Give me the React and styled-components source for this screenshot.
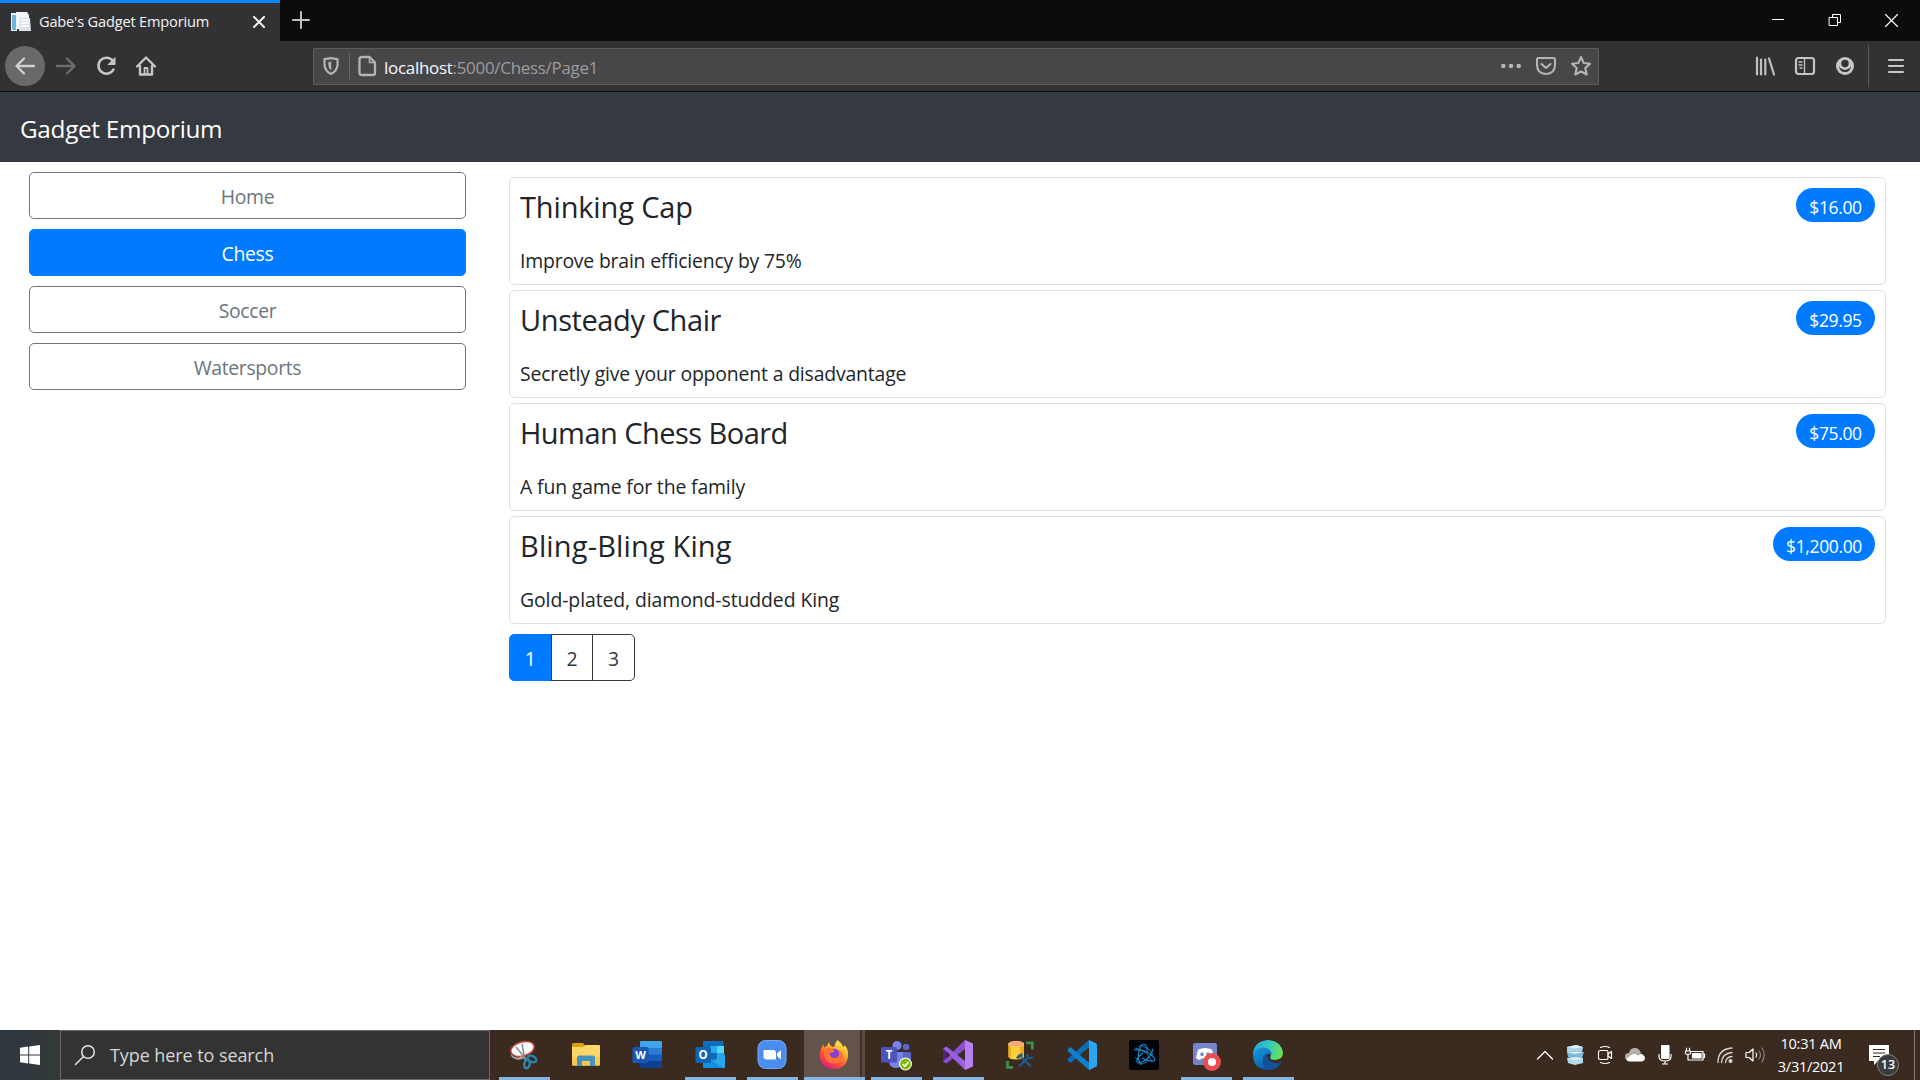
import React from "react";
import styled, { createGlobalStyle } from "styled-components";

const Global = createGlobalStyle`
  * { box-sizing: border-box; }
  html, body { margin: 0; padding: 0; }
  body { background: #fff; overflow: hidden; font-family: "Open Sans", "Noto Sans", sans-serif; }
  svg { display: block; flex: none; overflow: visible; }
`;

const Screen = styled.div`
  width: 1920px;
  height: 1080px;
  display: flex;
  flex-direction: column;
  background: #fff;
`;

/* ---------- browser chrome ---------- */
const TabStrip = styled.div`
  height: 41px;
  display: flex;
  background: #0c0c0d;
  flex: none;
`;
const Tab = styled.div`
  width: 280px;
  height: 41px;
  padding: 0 14px 0 11px;
  border-top: 3px solid #0a84ff;
  background: #323234;
  display: flex;
  align-items: center;
`;
const TabTitle = styled.span`
  flex: 1;
  margin-left: 8px;
  padding-bottom: 2px;
  font-size: 14.6px;
  line-height: 20px;
  letter-spacing: -0.18px;
  color: #f4f4f5;
  white-space: nowrap;
`;
const NewTab = styled.div`
  width: 42px;
  height: 40px;
  display: flex;
  align-items: center;
  justify-content: center;
`;
const WindowButtons = styled.div`
  margin-left: auto;
  display: flex;
`;
const WindowButton = styled.div`
  width: 57px;
  height: 40px;
  display: flex;
  align-items: center;
  justify-content: center;
`;
const Toolbar = styled.div`
  height: 51px;
  flex: none;
  display: flex;
  align-items: center;
  background: #323234;
  border-bottom: 1px solid #0c0c0d;
  padding: 0 4px 0 5px;
`;
const NavButton = styled.div`
  width: 40px;
  height: 40px;
  border-radius: 50%;
  display: flex;
  align-items: center;
  justify-content: center;
  background: ${(p) => (p.$filled ? "#69696b" : "transparent")};
  margin-right: ${(p) => p.$gap || "0"};
`;
const UrlBox = styled.div`
  width: 1286px;
  height: 37px;
  margin: 0 0 0 147px;
  background: #474749;
  border: 1px solid #5c5c5e;
  border-radius: 1px;
  display: flex;
  align-items: center;
  padding: 0 7px 0 9px;
`;
const UrlDivider = styled.div`
  width: 1px;
  height: 26px;
  background: #68686a;
  margin: 0 8px 0 10px;
`;
const UrlText = styled.span`
  margin-left: 8px;
  flex: 1;
  font-size: 16.9px;
  line-height: 24px;
  padding-top: 3px;
  color: #9c9c9e;
  white-space: nowrap;
  letter-spacing: -0.25px;
  b { font-weight: 400; color: #f9f9fa; }
`;
const UrlActions = styled.div`
  display: flex;
  gap: 15px;
`;
const ToolRight = styled.div`
  margin-left: auto;
  display: flex;
  align-items: center;
`;
const ToolButton = styled.div`
  width: 40px;
  display: flex;
  justify-content: center;
`;
const ToolDivider = styled.div`
  width: 1px;
  height: 42px;
  background: #58585a;
  margin: 0 7px 0 3px;
`;

/* ---------- page ---------- */
const Navbar = styled.header`
  height: 70px;
  flex: none;
  background: #343a40;
  display: flex;
  align-items: center;
  padding: 2px 20px 0;
  color: #fff;
  font-size: 24.3px;
  line-height: 37px;
  letter-spacing: -0.3px;
`;
const Content = styled.main`
  flex: 1;
  display: flex;
  align-items: flex-start;
  padding: 10px 34px 0 29px;
`;
const Sidebar = styled.nav`
  width: 437px;
  margin-right: 43px;
  display: flex;
  flex-direction: column;
  gap: 10px;
`;
const CategoryButton = styled.a`
  height: 47px;
  border: 1px solid ${(p) => (p.$active ? "#007bff" : "#6c757d")};
  border-radius: 5px;
  background: ${(p) => (p.$active ? "#007bff" : "#fff")};
  color: ${(p) => (p.$active ? "#fff" : "#6c757d")};
  display: flex;
  align-items: center;
  justify-content: center;
  padding-top: 1px;
  font-size: 19.4px;
  letter-spacing: -0.34px;
`;
const Products = styled.section`
  flex: 1;
  padding-top: 5px;
  display: flex;
  flex-direction: column;
  gap: 5px;
`;
const Card = styled.article`
  height: 108px;
  border: 1px solid #dee2e6;
  border-radius: 5px;
  padding: 10px;
  color: #212529;
`;
const CardHead = styled.div`
  display: flex;
  justify-content: space-between;
  align-items: flex-start;
  height: 34px;
`;
const CardTitle = styled.h4`
  margin: 0;
  font-weight: 400;
  font-size: 29px;
  line-height: 38px;
  white-space: nowrap;
  letter-spacing: ${(p) => p.$tracking}px;
`;
const Price = styled.span`
  height: 34px;
  border-radius: 17px;
  background: #007bff;
  color: #fff;
  width: ${(p) => p.$w}px;
  text-align: center;
  font-size: 17.5px;
  line-height: 38px;
  letter-spacing: -0.35px;
`;
const CardText = styled.p`
  margin: 24px 0 0;
  font-size: 19.4px;
  line-height: 30px;
  white-space: nowrap;
  letter-spacing: ${(p) => p.$tracking}px;
`;
const Pager = styled.div`
  display: flex;
  margin-top: 5px;
`;
const PageLink = styled.a`
  width: 42.66px;
  height: 47px;
  margin-left: ${(p) => (p.$first ? 0 : -1)}px;
  border: 1px solid ${(p) => (p.$active ? "#007bff" : "#343a40")};
  background: ${(p) => (p.$active ? "#007bff" : "#fff")};
  color: ${(p) => (p.$active ? "#fff" : "#343a40")};
  border-radius: ${(p) => (p.$first ? "5px 0 0 5px" : p.$last ? "0 5px 5px 0" : "0")};
  display: flex;
  align-items: center;
  justify-content: center;
  padding-top: 1px;
  font-size: 19.4px;
`;

/* ---------- taskbar ---------- */
const Taskbar = styled.footer`
  height: 50px;
  flex: none;
  display: flex;
  background: #3a2a20;
  color: #fff;
`;
const Start = styled.div`
  width: 60px;
  display: flex;
  align-items: center;
  justify-content: center;
  background: linear-gradient(90deg, #2e3740, #343938);
`;
const Search = styled.div`
  width: 430px;
  border: 1px solid #6b6866;
  background: #333;
  display: flex;
  align-items: center;
  padding-left: 14px;
  color: #d6d6d6;
  font-size: 18px;
  letter-spacing: -0.08px;
  span { margin-left: 15px; }
`;
const Apps = styled.div`
  display: flex;
  margin-left: 3px;
`;
const AppButton = styled.div`
  width: 62px;
  height: 50px;
  padding: 10px 0 0 ${(p) => (p.$focused ? 15 : 16) + (p.$nudge || 0)}px;
  background: ${(p) =>
    p.$focused
      ? "linear-gradient(#85b5e3,#85b5e3) 0 47px/61px 3px no-repeat, linear-gradient(90deg,#62544c 56px,#3d2f27 56px,#3d2f27 58px,#584941 58px) 0 0/61px 50px no-repeat"
      : p.$open
      ? "linear-gradient(#85b5e3,#85b5e3) 6px 47px/51px 3px no-repeat"
      : "none"};
  margin-left: ${(p) => (p.$focused ? 1 : 0)}px;
  margin-right: ${(p) => (p.$focused ? -1 : 0)}px;
`;
const Tray = styled.div`
  margin-left: auto;
  display: flex;
  align-items: center;
`;
const TrayIcon = styled.div`
  width: 30px;
  display: flex;
  justify-content: center;
`;
const Clock = styled.div`
  width: 82px;
  font-size: 14.6px;
  line-height: 23px;
  text-align: center;
  white-space: nowrap;
  letter-spacing: -0.3px;
`;
const Notices = styled.div`
  position: relative;
  width: 62px;
  height: 50px;
  padding: 15px 0 0 17px;
`;
const NoticeCount = styled.span`
  position: absolute;
  left: 25px;
  top: 24px;
  width: 22px;
  height: 22px;
  border: 1px solid #86807b;
  border-radius: 50%;
  background: #3b3b3b;
  font-size: 12.5px;
  line-height: 20px;
  font-weight: 600;
  text-align: center;
`;
const ShowDesktop = styled.div`
  width: 6px;
  height: 50px;
  border-left: 1px solid #82766f;
`;

const Stroke = ({ w = 20, h = w, c = "#c6c6c7", sw = 2, children }) => (
  <svg width={w} height={h} viewBox={`0 0 ${w} ${h}`} fill="none" stroke={c} strokeWidth={sw} strokeLinecap="round" strokeLinejoin="round">
    {children}
  </svg>
);

const Favicon = () => (
  <svg width="20" height="20" viewBox="0 0 20 20">
    <path d="M0 1h6v18H0z" fill="#e8f3fa" />
    <path d="M1 3h4v15H1z" fill="#6fb2dc" />
    <path d="M5 0h11l2 3v14H6z" fill="#f2f5f7" />
    <path d="M9 6h10l1 13H8z" fill="#dce2e6" />
    <path d="M10 8h8M10 11h8M10 14h8" stroke="#fff" strokeWidth="1.3" />
  </svg>
);

const SnipIcon = () => (
  <svg width="30" height="30" viewBox="0 0 30 30">
    <ellipse cx="13.500" cy="9" rx="12" ry="7" fill="#fff" stroke="#c4403d" strokeWidth="1.4" transform="rotate(-16 13.5 9)" />
    <path d="M1.500 14q6 6 11 2l3 2q-4 2.500-8 1.500Q2 18 1.500 14z" fill="#a9a9ab" />
    <path d="M7 7l10 12M13 4l3 16" stroke="#8d8f92" strokeWidth="1.6" />
    <g fill="none" stroke="#2f82a9" strokeWidth="2.500">
      <ellipse cx="23" cy="19" rx="4.600" ry="2.900" transform="rotate(25 23 19)" />
      <ellipse cx="18" cy="24" rx="2.700" ry="4.300" transform="rotate(12 18 24)" />
    </g>
  </svg>
);
const ExplorerIcon = () => (
  <svg width="30" height="30" viewBox="0 0 30 30">
    <path d="M1 4.500q0-1.500 1.500-1.500H12l2 2.500V9H1z" fill="#d9a00f" />
    <path d="M1 7h11l2.500-2H28q1 0 1 1v18.500q0 1-1 1H2q-1 0-1-1z" fill="#fcd667" />
    <path d="M1 17h28v7.500q0 1-1 1H2q-1 0-1-1z" fill="#f8cb50" />
    <path d="M6 26v-8q0-2.500 2.500-2.500h13Q24 15.500 24 18v8h-5v-5h-8v5z" fill="#4693bb" />
  </svg>
);
const WordIcon = () => (
  <svg width="30" height="30" viewBox="0 0 30 30">
    <rect x="8" y="1" width="22" height="27" rx="1.500" fill="#2b7cd3" />
    <path d="M8 8V2.500Q8 1 9.500 1h19Q30 1 30 2.500V8z" fill="#41a5ee" />
    <path d="M8 14.500h22V21H8z" fill="#185abd" />
    <path d="M8 21h22v5.500q0 1.500-1.500 1.500h-19Q8 28 8 26.500z" fill="#103f91" />
    <rect x="0.500" y="7" width="16" height="16" rx="1.500" fill="#1a56b4" />
    <text x="8.500" y="19" fontSize="11" fontWeight="700" fill="#fff" textAnchor="middle" fontFamily="Open Sans">W</text>
  </svg>
);
const OutlookIcon = () => (
  <svg width="30" height="30" viewBox="0 0 30 30">
    <rect x="8" y="1" width="20.500" height="20" rx="1" fill="#0f6cbd" />
    <path d="M15 6h7v7h-7z" fill="#28a8ea" />
    <path d="M22 6h7v7h-7z" fill="#50d9ff" />
    <path d="M22 13h7v7h-7z" fill="#28a8ea" />
    <path d="M8 14l11 7 11-7v12.500q0 1.500-1.500 1.500h-19Q8 28 8 26.500z" fill="#1490df" />
    <path d="M30 15v11.500q0 1.500-1.500 1.500L17 21z" fill="#28a8ea" />
    <rect x="0.500" y="7" width="15.500" height="16" rx="1.500" fill="#1066b5" />
    <text x="8.200" y="19" fontSize="11.500" fontWeight="700" fill="#fff" textAnchor="middle" fontFamily="Open Sans">O</text>
  </svg>
);
const ZoomIcon = () => (
  <svg width="30" height="30" viewBox="0 0 30 30">
    <rect x="1" y="0.500" width="28" height="28" rx="7.500" fill="#4a8cf0" stroke="#78a9f3" />
    <path d="M6.500 10H16q3 0 3 3v6.500H9.500q-3 0-3-3z" fill="#fff" />
    <path d="M20 13.500l4-3.500v9.500l-4-3.500z" fill="#fff" />
  </svg>
);
const FirefoxIcon = () => (
  <svg width="30" height="30" viewBox="0 0 30 30">
    <defs>
      <linearGradient id="ff" x1="0.850" y1="0" x2="0.250" y2="1">
        <stop offset="0" stopColor="#fff44f" /><stop offset="0.350" stopColor="#ffb12e" />
        <stop offset="0.650" stopColor="#ff5634" /><stop offset="1" stopColor="#e31587" />
      </linearGradient>
    </defs>
    <path d="M18.500 0q4.500 3 6 7 1.300-.5 1.200-2 4.300 5 3.300 11.500Q27.500 28.500 15 29 2 28.500.7 16.500.4 11 3 6.500l.8-2.300 1.500 3.300q1.500-1.500 3-1.800 0-2 1.800-3.400.4 2.800 2.600 4.200 1.500.7 2.500.5Q15.500 3 18.500 0z" fill="url(#ff)" />
    <circle cx="15" cy="14" r="5.600" fill="#8a3fd0" />
    <path d="M5 9q4.500-2.500 9 .5 1.500.3 1.500 1.200-1 2-5 2.300.5 5.500 6 5 4-.8 4-5-.5-2-2-3.500 6.500 2 5 8-2 6-9 6-9-.5-9.500-9z" fill="#ff7430" />
  </svg>
);
const TeamsIcon = () => (
  <svg width="32" height="30" viewBox="0 0 32 30">
    <circle cx="17" cy="5.500" r="4.500" fill="#7b83eb" />
    <circle cx="26" cy="7" r="3.300" fill="#5a63cf" />
    <path d="M20 12h10q1 0 1 1v7q0 5-5 5h-6z" fill="#5a63cf" />
    <path d="M9 12h14v9q0 7-7 7t-7-7z" fill="#7b83eb" />
    <rect x="1" y="7" width="16" height="15.500" rx="1.500" fill="#4b53bc" />
    <text x="9" y="19" fontSize="11.500" fontWeight="700" fill="#fff" textAnchor="middle" fontFamily="Open Sans">T</text>
    <circle cx="25.500" cy="24" r="6.500" fill="#fff" />
    <circle cx="25.500" cy="24" r="5.400" fill="#7fba00" />
    <path d="M22.500 24l2.200 2.300 3.800-4.300" fill="none" stroke="#fff" strokeWidth="1.600" />
  </svg>
);
const VisualStudioIcon = () => (
  <svg width="30" height="30" viewBox="0 0 30 30">
    <path d="M0 8.500L3.500 6.500 5 11v9l-1.500 3.500L0 21.500z" fill="#52218a" />
    <path d="M3.500 23.500L0 21.500 22 0v9z" fill="#8a50cf" />
    <path d="M3.500 6.500L0 8.500 22 30v-9z" fill="#9a5fe0" />
    <path d="M3.500 11.500v7l3.600-3.500z" fill="#3a2a20" />
    <path d="M22 0l8 3.500v23L22 30z" fill="#b57ff0" />
  </svg>
);
const SqlIcon = () => (
  <svg width="30" height="30" viewBox="0 0 30 30">
    <path d="M21 2.800h6.300V9.500M8 27.300H2.500V21" fill="none" stroke="#3f8f45" strokeWidth="2.800" />
    <path d="M3.500 4v12.500q0 3 7.700 3t7.800-3V4z" fill="#fdcf3c" />
    <path d="M3.500 4v12.500q0 1.500 2.500 2.300V5zM15 5.500L19 4v12.500q0 1.500-4 2.500z" fill="#f4ab1e" />
    <ellipse cx="11.200" cy="4" rx="7.600" ry="2.600" fill="#f6a878" stroke="#f9c66a" />
    <g stroke="#1d5c8c" fill="none">
      <path d="M14 26.500L23.500 17M16.500 17.500l9.500 9" strokeWidth="2.400" />
      <path d="M12.500 18.500q1.500-3.500 5-3.500" strokeWidth="3" />
      <path d="M22.300 13.500q-.3 3.500 1.500 4.500 1.800.8 4-1.200" strokeWidth="2" />
    </g>
  </svg>
);
const CodeIcon = () => (
  <svg width="30" height="30" viewBox="0 0 30 30">
    <path d="M1 18.500L22 0l4 4L4 22.500Q3 23 2 22L.800 20.500q-.8-1 .2-2z" fill="#0a6fb5" />
    <path d="M1 11.500L22 30l4-4L4 7.500Q3 7 2 8L.800 9.500q-.8 1 .2 2z" fill="#1180cc" />
    <path d="M22 0l7 3.200q1 .5 1 1.500v20.600q0 1-1 1.500L22 30z" fill="#2aa5ef" />
  </svg>
);
const BattleIcon = () => (
  <svg width="30" height="30" viewBox="0 0 30 30">
    <rect width="30" height="30" rx="2" fill="#020306" />
    <g fill="none" stroke="#168bd4" strokeWidth="1.200">
      <path d="M5 10q9-1 16 4 7 5 4 7-6 1-12-3" />
      <path d="M12 25q-4-6-2-14 2-7 5-7 4 2 3 8" />
      <path d="M24 9q-2 8-9 12-7 4-7 0 0-4 6-8" />
      <path d="M6 8q7 1 12 6l5 7M9 7l3-2 9 5 3 5M6 17l7 7 5-2" strokeWidth="0.800" />
    </g>
  </svg>
);
const DiscordIcon = () => (
  <svg width="30" height="30" viewBox="0 0 30 30">
    <rect x="1" y="3" width="24" height="22" rx="2.500" fill="#7486c9" />
    <path d="M6 9.500q7-3 14 0l2 8.500q-2 2-4 2l-1-1.500H9L8 20q-2 0-4-2z" fill="#fff" />
    <ellipse cx="10" cy="14.200" rx="1.700" ry="2" fill="#7486c9" />
    <ellipse cx="16" cy="14.200" rx="1.700" ry="2" fill="#7486c9" />
    <circle cx="20" cy="22" r="9" fill="#ed4c50" />
    <circle cx="20" cy="22" r="4" fill="#fff" />
  </svg>
);
const EdgeIcon = () => (
  <svg width="30" height="30" viewBox="0 0 30 30">
    <defs>
      <linearGradient id="edgeTop" x1="0" y1="0.300" x2="1" y2="0.500">
        <stop offset="0" stopColor="#2aa5dd" /><stop offset="0.500" stopColor="#36c8c2" /><stop offset="1" stopColor="#6be251" />
      </linearGradient>
      <linearGradient id="edgeLow" x1="0" y1="0" x2="0.500" y2="1">
        <stop offset="0" stopColor="#1b9de2" /><stop offset="1" stopColor="#0b5cab" />
      </linearGradient>
    </defs>
    <path d="M0 14Q1 1 15 0q13 .5 15 12.500 0 7-8 7.500-6-.2-4.500-3Q19 11 12 8 4 7 0 14z" fill="url(#edgeTop)" />
    <path d="M0 14Q3 7 11 7.500q8 1.500 7.500 7-7-2-8.500 5 0 7 6 10.500Q0 30 0 14z" fill="url(#edgeLow)" />
    <path d="M10 19.500q0-5 5-6-2 4 2 7.500 5 3.500 12 .8Q25 30 16 30q-6-4-6-10.500z" fill="#12509a" />
  </svg>
);

const APPS = [
  { icon: SnipIcon, open: true },
  { icon: ExplorerIcon },
  { icon: WordIcon, nudge: -1 },
  { icon: OutlookIcon, open: true },
  { icon: ZoomIcon, open: true },
  { icon: FirefoxIcon, focused: true },
  { icon: TeamsIcon, open: true, nudge: -1 },
  { icon: VisualStudioIcon, open: true },
  { icon: SqlIcon },
  { icon: CodeIcon },
  { icon: BattleIcon },
  { icon: DiscordIcon, open: true, nudge: 1 },
  { icon: EdgeIcon, open: true },
];

const PRODUCTS = [
  { name: "Thinking Cap", text: "Improve brain efficiency by 75%", price: "$16.00", w: 79, nameTrack: -0.15, textTrack: -0.19 },
  { name: "Unsteady Chair", text: "Secretly give your opponent a disadvantage", price: "$29.95", w: 79, nameTrack: -0.4, textTrack: -0.16 },
  { name: "Human Chess Board", text: "A fun game for the family", price: "$75.00", w: 79, nameTrack: -0.53, textTrack: -0.14 },
  { name: "Bling-Bling King", text: "Gold-plated, diamond-studded King", price: "$1,200.00", w: 102, nameTrack: 0.15, textTrack: -0.08 },
];

const CATEGORIES = ["Home", "Chess", "Soccer", "Watersports"];

export default function App() {
  return (
    <Screen>
      <Global />
      <TabStrip>
        <Tab>
          <Favicon />
          <TabTitle>Gabe's Gadget Emporium</TabTitle>
          <Stroke w={14} c="#fff" sw={1.9}><path d="M2 2l10 10M12 2L2 12" /></Stroke>
        </Tab>
        <NewTab>
          <Stroke w={18} c="#c0c0c1"><path d="M9 1v16M1 9h16" /></Stroke>
        </NewTab>
        <WindowButtons>
          <WindowButton><Stroke w={12} c="#fff" sw={1}><path d="M0 5.500h12" strokeLinecap="butt" /></Stroke></WindowButton>
          <WindowButton>
            <Stroke w={12} c="#fff" sw={1}><path d="M.5 3.500h8v8h-8zM3.500 3.500v-3h8v8h-3" /></Stroke>
          </WindowButton>
          <WindowButton><Stroke w={13} c="#fff" sw={1.1}><path d="M.5.5l12 12M12.500.5l-12 12" /></Stroke></WindowButton>
        </WindowButtons>
      </TabStrip>

      <Toolbar>
        <NavButton $filled $gap="1px">
          <Stroke w={20} c="#d0d0d1" sw={2.3}><path d="M19 10H1.500M9 2.500L1.500 10 9 17.500" /></Stroke>
        </NavButton>
        <NavButton>
          <Stroke w={20} c="#6c6c6e" sw={2.3}><path d="M1 10h17.500M11 2.500l7.500 7.500-7.500 7.500" /></Stroke>
        </NavButton>
        <NavButton>
          <Stroke w={20} c="#c6c6c7" sw={2.5}>
            <path d="M17 5A8 8 0 1 0 17.500 13.500" />
            <path d="M19 2v6.500h-6.500z" fill="#c6c6c7" strokeWidth="1" />
          </Stroke>
        </NavButton>
        <NavButton>
          <Stroke w={20} c="#c6c6c7" sw={2.4}>
            <path d="M1 10.500L10 1.500l9 9M4 10v8.500h12V10" />
            <path d="M8.500 18v-6h3v6" strokeWidth="1.800" />
          </Stroke>
        </NavButton>
        <UrlBox>
          <Stroke w={16} h={18} c="#b4b4b5" sw={2.2}>
            <path d="M8 1.200l6.500 1v6Q14 14 8 17 2 14 1.500 8.200v-6z" />
            <path d="M8 5v8q-2.500-2-2.500-5.500V5.500z" fill="#b4b4b5" strokeWidth="0.500" />
          </Stroke>
          <UrlDivider />
          <Stroke w={18} h={20} c="#b4b4b5" sw={2.3}>
            <path d="M4 1h7.500L17 6.500V17q0 2-2 2H4q-2.500 0-2.500-2V3Q1.500 1 4 1z" /><path d="M11.500 1.500V6.500h5" strokeWidth="1.600" />
          </Stroke>
          <UrlText><b>localhost</b>:5000/Chess/Page1</UrlText>
          <UrlActions>
            <svg width="20" height="20" viewBox="0 0 20 20" fill="#b4b4b5"><circle cx="2.300" cy="10" r="2.300" /><circle cx="10" cy="10" r="2.300" /><circle cx="17.700" cy="10" r="2.300" /></svg>
            <Stroke w={20} c="#b4b4b5" sw={2.1}><path d="M2.500 2h15q1.500 0 1.500 1.500V9q0 8.500-9 9-9-.5-9-9V3.500Q1 2 2.500 2z" /><path d="M5.500 8l4.500 4 4.500-4" /></Stroke>
            <Stroke w={20} c="#b4b4b5" sw={2.1}><path d="M10 1l2.700 6 6.300.7-4.700 4.300 1.400 6.500L10 15.300l-5.700 3.200L5.700 12 1 7.700 7.300 7z" /></Stroke>
          </UrlActions>
        </UrlBox>
        <ToolRight>
          <ToolButton>
            <Stroke w={20} c="#c0c0c1" sw={2.2}><path d="M2 1.500v17M6 3.500v15M10.300 3.500v15M14 2.500l5 16" /></Stroke>
          </ToolButton>
          <ToolButton>
            <Stroke w={20} sw={2.2}><rect x="1" y="2" width="18" height="16" rx="2.500" /><path d="M9.500 2v16M4 6h3M4 9h3M5 12h2" strokeWidth="1.300" /></Stroke>
          </ToolButton>
          <ToolButton>
            <svg width="18" height="18" viewBox="0 0 18 18"><circle cx="9" cy="9" r="9" fill="#c6c6c7" /><circle cx="9" cy="6.500" r="3.700" fill="#323234" /><path d="M3 9.500q6 5.500 12 0-1 5.500-6 5.500t-6-5.500z" fill="#323234" /><path d="M4 10q5 4.500 10 0" stroke="#c6c6c7" strokeWidth="1.200" fill="none" /></svg>
          </ToolButton>
          <ToolDivider />
          <ToolButton>
            <Stroke w={16} sw={2.1}><path d="M1 2h14M1 8h14M1 14h14" /></Stroke>
          </ToolButton>
        </ToolRight>
      </Toolbar>

      <Navbar>Gadget Emporium</Navbar>
      <Content>
        <Sidebar>
          {CATEGORIES.map((c) => (
            <CategoryButton key={c} $active={c === "Chess"}>{c}</CategoryButton>
          ))}
        </Sidebar>
        <Products>
          {PRODUCTS.map((p) => (
            <Card key={p.name}>
              <CardHead>
                <CardTitle $tracking={p.nameTrack}>{p.name}</CardTitle>
                <Price $w={p.w}>{p.price}</Price>
              </CardHead>
              <CardText $tracking={p.textTrack}>{p.text}</CardText>
            </Card>
          ))}
          <Pager>
            <PageLink $first $active>1</PageLink>
            <PageLink>2</PageLink>
            <PageLink $last>3</PageLink>
          </Pager>
        </Products>
      </Content>

      <Taskbar>
        <Start>
          <svg width="20" height="20" viewBox="0 0 20 20" fill="#fff"><path d="M0 2.700L8.200 1.600V9.500H0zM9.200 1.500L20 0v9.500H9.200zM0 10.500h8.200v7.900L0 17.300zM9.200 10.500H20V20L9.200 18.500z" /></svg>
        </Start>
        <Search>
          <Stroke w={20} c="#e6e6e6" sw={1.5}><circle cx="13" cy="7" r="6.300" /><path d="M8.500 11.500L.5 19.500" /></Stroke>
          <span>Type here to search</span>
        </Search>
        <Apps>
          {APPS.map(({ icon: Icon, open, focused, nudge }, i) => (
            <AppButton key={i} $open={open} $focused={focused} $nudge={nudge}><Icon /></AppButton>
          ))}
        </Apps>
        <Tray>
          <TrayIcon><Stroke w={16} h={10} c="#fff" sw={1.3}><path d="M.5 9L8 1.500 15.500 9" /></Stroke></TrayIcon>
          <TrayIcon>
            <svg width="18" height="20" viewBox="0 0 18 20"><path d="M1 2l9-2 7 2-1 5-7 1-8-1z" fill="#a9d3ea" /><path d="M1 7l8-1 9 1-2 6-8 1-6-2z" fill="#7fb9d9" /><path d="M1 13l8-1 8 1v5l-8 2-7-2z" fill="#b4daee" /><path d="M1 2l9-2 7 2-8 1.500zM1 7.500l9-1 7 1-8 1.500zM1 13.500l8-1 8 1-8 1.500z" fill="#e2f2fa" /></svg>
          </TrayIcon>
          <TrayIcon>
            <Stroke w={16} h={18} c="#fff" sw={1.2}><rect x="1.500" y="4.500" width="9.500" height="9" rx="1.500" /><path d="M11 8l3.500-2.500v7L11 10M3.500 1.500Q8 -.5 12.500 1.500M3.500 16.500q4.500 2 9 0" /></Stroke>
          </TrayIcon>
          <TrayIcon>
            <svg width="20" height="14" viewBox="0 0 20 14"><path d="M4 12Q0 12 0 8.500 0 5 4 5q1-5 6-5 4 0 6 5L7 12z" fill="#b5b0ac" /><path d="M5 13.500q-3 0-4-2.500L7 6.500q2-1 4 0l2 1Q16 4.500 18 7q2 1 2 3.300t-3.500 3.200z" fill="#fff" /></svg>
          </TrayIcon>
          <TrayIcon>
            <svg width="14" height="20" viewBox="0 0 14 20"><rect x="3" y="0" width="8.500" height="14" rx="1" fill="#fff" /><path d="M1 9v2.500q0 4.500 6 4.500t6-4.500V9M7 15.500V19M4 19h6" stroke="#fff" fill="none" strokeWidth="1.200" /></svg>
          </TrayIcon>
          <TrayIcon>
            <Stroke w={20} h={14} c="#fff" sw={1.2}><path d="M5.500 3.500H18v8.500H5.500M18.500 6h1v3.500h-1M1.500 0v3M4.500 0v3M.5 3h5v2.500Q3 7.500.5 5.500zM3 7v5h3" /><path d="M7.500 5.500h8.500v4.500H7.500z" fill="#fff" /></Stroke>
          </TrayIcon>
          <TrayIcon>
            <Stroke w={16} h={16} c="#d7d3d0" sw={1.3}><path d="M1 15.500Q1 2 15 1M4.500 15.500Q5 6.500 15 5.500M8.500 15.500Q9 10 15 9.500" /><circle cx="13.500" cy="14" r="1.400" fill="#fff" /></Stroke>
          </TrayIcon>
          <TrayIcon>
            <Stroke w={20} h={16} c="#fff" sw={1.2}><path d="M1 5.500h3L8 2v12l-4-3.500H1z" /><path d="M11 6q1.500 2 0 4" /><path d="M14 4q3 4 0 8M17 1q4.500 7 0 14" stroke="#8d837c" /></Stroke>
          </TrayIcon>
          <Clock>10:31 AM<br />3/31/2021</Clock>
          <Notices>
            <svg width="21" height="20" viewBox="0 0 21 20"><path d="M0 0h20v16H9l-4 4v-4H0z" fill="#fff" /><path d="M4 4.500h12M4 8h12M4 11.500h7" stroke="#3a2a20" strokeWidth="1.200" /></svg>
            <NoticeCount>13</NoticeCount>
          </Notices>
          <ShowDesktop />
        </Tray>
      </Taskbar>
    </Screen>
  );
}
